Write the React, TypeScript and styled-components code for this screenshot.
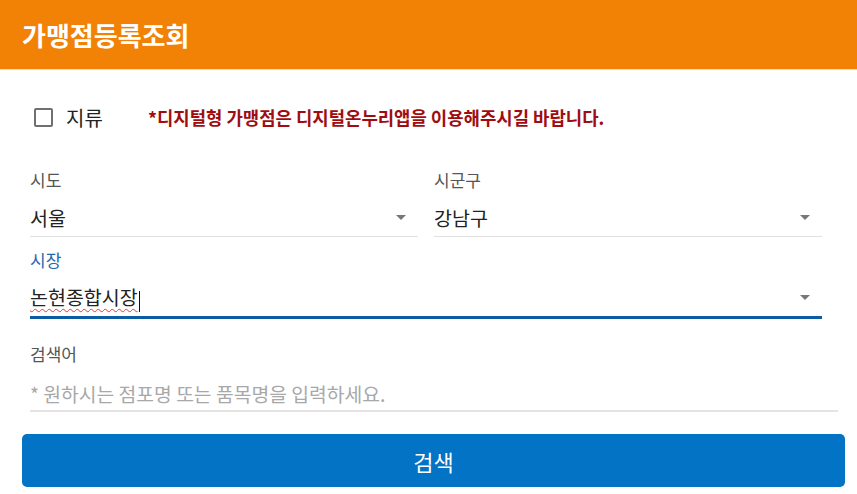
import React from 'react';
import styled, { createGlobalStyle } from 'styled-components';

const GlobalStyle = createGlobalStyle`
  body {
    margin: 0;
    background: #ffffff;
    font-family: "Noto Sans CJK KR", "Noto Sans", "Liberation Sans", sans-serif;
  }
`;

const Page = styled.div`
  width: 857px;
  min-height: 494px;
  background: #ffffff;
`;

const Header = styled.header`
  height: 70px;
  background: #f28206;
  border-bottom: 1px solid #eadfd4;
  display: flex;
  align-items: center;
  padding-left: 22px;
  box-sizing: border-box;
`;

const Title = styled.h1`
  margin: 0;
  color: #ffffff;
  font-size: 26px;
  font-weight: 700;
  letter-spacing: 0;
`;

const Content = styled.main`
  padding: 30px 12px 0 22px;
`;

const CheckRow = styled.div`
  display: flex;
  align-items: center;
  height: 34px;
  padding-left: 12px;
`;

const Box = styled.span`
  width: 15px;
  height: 15px;
  border: 2px solid #707070;
  border-radius: 2px;
  box-sizing: content-box;
  margin-right: 13px;
`;

const CheckLabel = styled.label`
  font-size: 20px;
  color: #222222;
  width: 82px;
`;

const Notice = styled.p`
  margin: 0;
  color: #a00d10;
  font-size: 17.8px;
  font-weight: 700;
  letter-spacing: 0;
`;

const Fields = styled.div`
  display: grid;
  grid-template-columns: 1fr 1fr;
  column-gap: 16px;
  margin: 36px 23px 0 8px;
`;

const Field = styled.div<{ $wide?: boolean; $first?: boolean }>`
  grid-column: ${({ $wide }) => ($wide ? '1 / -1' : 'auto')};
  margin-top: ${({ $first }) => ($first ? '0' : '13px')};
`;

const Label = styled.div<{ $active?: boolean }>`
  font-size: 17px;
  line-height: 20px;
  color: ${({ $active }) => ($active ? '#2567ad' : '#555555')};
`;

const SelectBox = styled.div<{ $active?: boolean }>`
  margin-top: 8px;
  height: 38px;
  display: flex;
  align-items: center;
  justify-content: space-between;
  border-bottom: ${({ $active }) => ($active ? '3px solid #0d5ba3' : '1px solid #e0e0e0')};
  box-sizing: content-box;
`;

const Value = styled.span<{ $spell?: boolean }>`
  font-size: 19.5px;
  color: #222222;
  text-decoration: ${({ $spell }) => ($spell ? 'underline wavy #e53935 1px' : 'none')};
  text-underline-offset: 3px;
  text-decoration-skip-ink: none;
`;

const Caret = styled.span`
  display: inline-block;
  width: 1px;
  height: 21px;
  background: #111111;
  vertical-align: middle;
  margin-left: 1px;
`;

const Arrow = styled.span`
  width: 0;
  height: 0;
  border-left: 5px solid transparent;
  border-right: 5px solid transparent;
  border-top: 5px solid #777777;
  margin-right: 12px;
`;

const SearchField = styled.div`
  margin: 25px 7px 0 8px;
`;

const Input = styled.input`
  display: block;
  width: 100%;
  margin-top: 14px;
  height: 32px;
  padding: 0;
  border: none;
  border-bottom: 2px solid #e4e4e4;
  outline: none;
  font-family: inherit;
  font-size: 19.3px;
  color: #222222;
  box-sizing: content-box;

  &::placeholder {
    color: #a8a8a8;
  }
`;

const SearchButton = styled.button`
  display: block;
  width: 100%;
  height: 53px;
  margin-top: 22px;
  border: none;
  border-radius: 5px;
  background: #0273c5;
  color: #ffffff;
  font-family: inherit;
  font-size: 22px;
  cursor: pointer;
`;

export default function App() {
  return (
    <Page>
      <GlobalStyle />
      <Header>
        <Title>가맹점등록조회</Title>
      </Header>
      <Content>
        <CheckRow>
          <Box />
          <CheckLabel>지류</CheckLabel>
          <Notice>*디지털형 가맹점은 디지털온누리앱을 이용해주시길 바랍니다.</Notice>
        </CheckRow>

        <Fields>
          <Field $first>
            <Label>시도</Label>
            <SelectBox>
              <Value>서울</Value>
              <Arrow />
            </SelectBox>
          </Field>
          <Field $first>
            <Label>시군구</Label>
            <SelectBox>
              <Value>강남구</Value>
              <Arrow />
            </SelectBox>
          </Field>
          <Field $wide>
            <Label $active>시장</Label>
            <SelectBox $active>
              <span>
                <Value $spell>논현종합시장</Value>
                <Caret />
              </span>
              <Arrow />
            </SelectBox>
          </Field>
        </Fields>

        <SearchField>
          <Label>검색어</Label>
          <Input placeholder="* 원하시는 점포명 또는 품목명을 입력하세요." />
        </SearchField>

        <SearchButton>검색</SearchButton>
      </Content>
    </Page>
  );
}
